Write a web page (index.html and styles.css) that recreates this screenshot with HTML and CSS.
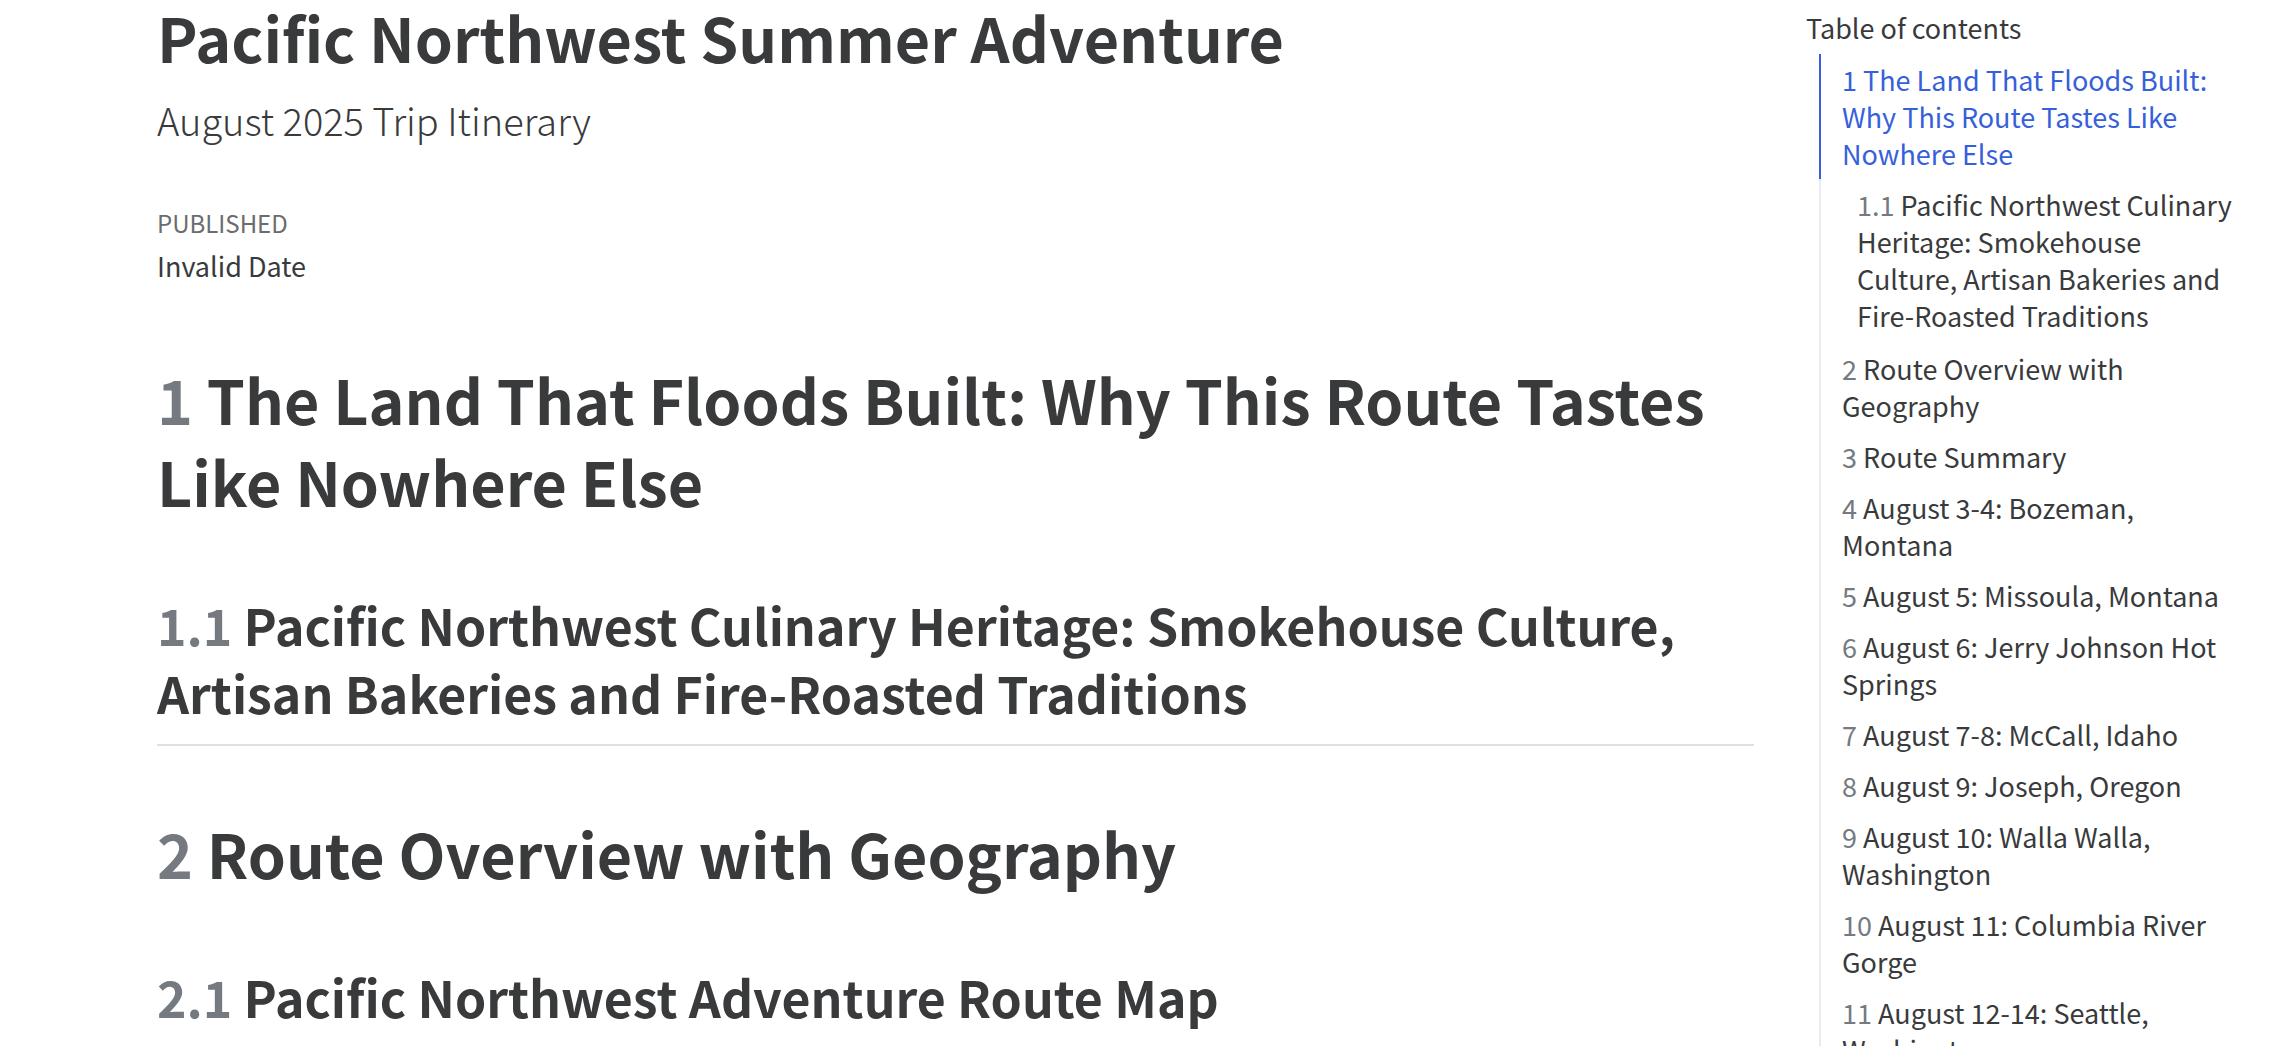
FILE: index.html
```html
<!DOCTYPE html>
<html lang="en">
<head>
<meta charset="utf-8">
<title>Pacific Northwest Summer Adventure</title>
<link rel="stylesheet" href="styles.css">
</head>
<body>
<div class="page">
<main class="content">
<header class="title-block">
<h1 class="title">Pacific Northwest Summer Adventure</h1>
<p class="subtitle">August 2025 Trip Itinerary</p>
<dl class="meta">
<dt class="meta-label">Published</dt>
<dd class="meta-value">Invalid Date</dd>
</dl>
</header>
<section class="chapter" id="s1">
<h1 class="heading"><span class="num">1</span> The Land That Floods Built: Why This Route Tastes Like Nowhere Else</h1>
<h2 class="subheading" id="s1-1"><span class="num">1.1</span> Pacific Northwest Culinary Heritage: Smokehouse Culture, Artisan Bakeries and Fire-Roasted Traditions</h2>
</section>
<section class="chapter" id="s2">
<h1 class="heading"><span class="num">2</span> Route Overview with Geography</h1>
<h2 class="subheading"><span class="num">2.1</span> Pacific Northwest Adventure Route Map</h2>
</section>
</main>
<nav class="toc" aria-labelledby="toc-title">
<h2 class="toc-title" id="toc-title">Table of contents</h2>
<ul class="toc-list">
<li><a class="toc-link active" href="#s1">1 The Land That Floods Built: Why This Route Tastes Like Nowhere Else</a>
<ul class="toc-sublist">
<li><a class="toc-link nested" href="#s1-1"><span class="num">1.1</span> Pacific Northwest Culinary Heritage: Smokehouse Culture, Artisan Bakeries and Fire-Roasted Traditions</a></li>
</ul></li>
<li><a class="toc-link" href="#s2"><span class="num">2</span> Route Overview with Geography</a></li>
<li><a class="toc-link" href="#s3"><span class="num">3</span> Route Summary</a></li>
<li><a class="toc-link" href="#s4"><span class="num">4</span> August 3-4: Bozeman, Montana</a></li>
<li><a class="toc-link" href="#s5"><span class="num">5</span> August 5: Missoula, Montana</a></li>
<li><a class="toc-link" href="#s6"><span class="num">6</span> August 6: Jerry Johnson Hot Springs</a></li>
<li><a class="toc-link" href="#s7"><span class="num">7</span> August 7-8: McCall, Idaho</a></li>
<li><a class="toc-link" href="#s8"><span class="num">8</span> August 9: Joseph, Oregon</a></li>
<li><a class="toc-link" href="#s9"><span class="num">9</span> August 10: Walla Walla, Washington</a></li>
<li><a class="toc-link" href="#s10"><span class="num">10</span> August 11: Columbia River Gorge</a></li>
<li><a class="toc-link" href="#s11"><span class="num">11</span> August 12-14: Seattle, Washington</a></li>
</ul>
</nav>
</div>
</body>
</html>
```
FILE: styles.css
```css
* {
  box-sizing: border-box;
}

body {
  margin: 0;
  height: 100vh;
  overflow: hidden;
  background: #fff;
  color: #393a3c;
  font-family: "Noto Sans CJK SC", "Noto Sans", sans-serif;
}

h1, h2, p, dl, dd, ul {
  margin: 0;
  padding: 0;
}

ul {
  list-style: none;
}

.page {
  display: grid;
  grid-template-columns: minmax(0, 1fr) 428px;
  column-gap: 52px;
  padding: 0 56px 0 157px;
}

.title {
  font-size: 61px;
  line-height: 74px;
}

.subtitle {
  margin-top: 18px;
  font-size: 38px;
  line-height: 56px;
  font-weight: 300;
}

.meta {
  padding: 55px 0 3px;
}

.meta-label {
  font-size: 24px;
  line-height: 40px;
  text-transform: uppercase;
  color: #6b6c6e;
}

.meta-value {
  font-size: 27px;
  line-height: 46px;
}

.heading {
  margin-top: 66px;
  font-size: 61px;
  line-height: 82px;
}

.subheading {
  margin-top: 68px;
  padding-bottom: 18px;
  border-bottom: 2px solid #dee0e2;
  font-size: 50px;
  line-height: 68px;
}

.num {
  color: #747a7f;
}

.toc-title {
  margin-top: 8px;
  font-size: 27px;
  line-height: 40px;
  font-weight: 400;
}

.toc-list {
  margin: 6px 0 0 13px;
  border-left: 2px solid #e9ebf0;
}

.toc-sublist {
  padding-bottom: 2px;
}

.toc-link {
  display: block;
  padding: 7px 0 7px 21px;
  font-size: 27px;
  line-height: 37px;
  color: inherit;
  text-decoration: none;
}

.toc-link.nested {
  padding-left: 36px;
}

.toc-link.active {
  margin-left: -2px;
  border-left: 2px solid #3660db;
  color: #3660db;
}
```
